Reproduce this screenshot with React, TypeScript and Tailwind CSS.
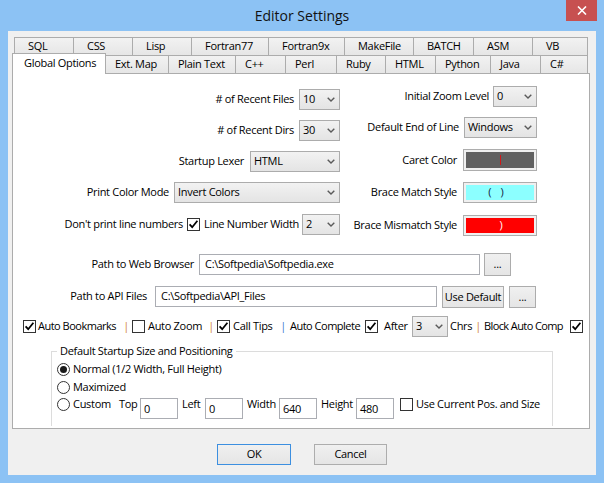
import React from "react";

function Chevron() {
  return (
    <svg width="8" height="5" viewBox="0 0 8 5" className="shrink-0">
      <path d="M0.7 0.7 L4 4 L7.3 0.7" stroke="#5a5a5a" strokeWidth="1.4" fill="none" />
    </svg>
  );
}

function Combo({ className, value }: { className: string; value: string }) {
  return (
    <div
      className={`${className} h-[21px] shrink-0 border border-[#acacac] bg-linear-to-b from-[#f2f2f2] to-[#e4e4e4] flex items-center justify-between pl-[3px] pr-[4px]`}
    >
      <span>{value}</span>
      <Chevron />
    </div>
  );
}

function Btn({ className, children }: { className: string; children: React.ReactNode }) {
  return (
    <div
      className={`${className} shrink-0 border bg-linear-to-b from-[#f0f0f0] to-[#e5e5e5] flex items-center justify-center`}
    >
      {children}
    </div>
  );
}

function TextBox({ className, value }: { className: string; value: string }) {
  return (
    <div className={`${className} shrink-0 h-[21px] border border-[#abadb3] bg-white flex items-center`}>
      {value}
    </div>
  );
}

function Check({ checked, className = "" }: { checked: boolean; className?: string }) {
  return (
    <div
      className={`${className} w-[13px] h-[13px] shrink-0 border border-[#333333] bg-white flex items-center justify-center`}
    >
      {checked && (
        <svg width="11" height="11" viewBox="0 0 11 11">
          <path d="M1.6 5.4 L4.2 8.2 L9.4 1.8" stroke="#000" strokeWidth="1.8" fill="none" />
        </svg>
      )}
    </div>
  );
}

function Radio({ checked }: { checked: boolean }) {
  return (
    <div className="w-[13px] h-[13px] shrink-0 rounded-full border border-[#333333] bg-white flex items-center justify-center">
      {checked && <div className="w-[7px] h-[7px] rounded-full bg-[#1a1a1a]" />}
    </div>
  );
}

const row1 = [
  { t: "SQL", w: "w-[60px]" },
  { t: "CSS", w: "w-[60px]" },
  { t: "Lisp", w: "w-[60px]" },
  { t: "Fortran77", w: "w-[78px]" },
  { t: "Fortran9x", w: "w-[77px]" },
  { t: "MakeFile", w: "w-[70px]" },
  { t: "BATCH", w: "w-[61px]" },
  { t: "ASM", w: "w-[60px]" },
  { t: "VB", w: "w-[56px]" },
];

const row2 = [
  { t: "Ext. Map", w: "w-[64px]" },
  { t: "Plain Text", w: "w-[68px]" },
  { t: "C++", w: "w-[51px]" },
  { t: "Perl", w: "w-[52px]" },
  { t: "Ruby", w: "w-[50px]" },
  { t: "HTML", w: "w-[51px]" },
  { t: "Python", w: "w-[56px]" },
  { t: "Java", w: "w-[51px]" },
  { t: "C#", w: "w-[48px]" },
];

export default function App() {
  return (
    <div className="w-[604px] h-[483px] bg-[#8cc2f4] flex flex-col overflow-hidden whitespace-nowrap font-['Open_Sans',sans-serif] text-[11px] tracking-[-0.3px] text-black">
      {/* Title bar */}
      <div className="relative h-[31px] shrink-0 flex items-center justify-center">
        <span className="text-[14px] tracking-normal text-[#111]">Editor Settings</span>
        <div className="absolute right-[7px] top-0 w-[31px] h-[21px] bg-[#c75050] flex items-center justify-center">
          <svg width="10" height="9" viewBox="0 0 10 9">
            <path d="M1 0.5 L9 8.5 M9 0.5 L1 8.5" stroke="#fff" strokeWidth="1.6" />
          </svg>
        </div>
      </div>

      {/* Client */}
      <div className="mx-[8px] h-[444px] shrink-0 bg-[#f0f0f0] flex flex-col">
        {/* Tab control */}
        <div className="ml-[4px] mt-[6px] w-[578px] flex flex-col">
          <div className="flex ml-[2px] h-[19px]">
            {row1.map((tab, i) => (
              <div
                key={tab.t}
                className={`${tab.w} ${i > 0 ? "-ml-px" : ""} h-[19px] shrink-0 border border-[#acacac] bg-linear-to-b from-[#f2f2f2] to-[#e6e6e6] flex items-center pl-[13px]`}
              >
                {tab.t}
              </div>
            ))}
          </div>
          <div className="flex -mt-[3px] h-[21px] items-end relative z-10">
            <div className="w-[94px] h-[21px] shrink-0 border-t border-l border-r border-[#acacac] bg-white flex items-center pl-[11px] pb-[1px]">
              Global Options
            </div>
            {row2.map((tab) => (
              <div
                key={tab.t}
                className={`${tab.w} -ml-px h-[19px] shrink-0 border border-[#acacac] bg-linear-to-b from-[#f2f2f2] to-[#e6e6e6] flex items-center pl-[9px]`}
              >
                {tab.t}
              </div>
            ))}
          </div>

          {/* Panel */}
          <div className="-mt-px h-[356px] border border-[#acacac] bg-white flex flex-col overflow-hidden">
            {/* Top section */}
            <div className="flex">
              <div className="w-[327px] shrink-0 flex flex-col items-end pt-[15px]">
                <div className="h-[21px] flex items-center">
                  <span># of Recent Files</span>
                  <Combo className="ml-[5px] w-[41px]" value="10" />
                </div>
                <div className="h-[21px] mt-[10px] flex items-center">
                  <span># of Recent Dirs</span>
                  <Combo className="ml-[5px] w-[41px]" value="30" />
                </div>
                <div className="h-[21px] mt-[10px] flex items-center">
                  <span>Startup Lexer</span>
                  <Combo className="ml-[6px] w-[90px]" value="HTML" />
                </div>
                <div className="h-[21px] mt-[10px] flex items-center">
                  <span>Print Color Mode</span>
                  <Combo className="ml-[5px] w-[166px]" value="Invert Colors" />
                </div>
                <div className="h-[22px] mt-[10px] flex items-center">
                  <span>Don't print line numbers</span>
                  <Check checked className="ml-[4px]" />
                  <span className="w-[99px] text-right">Line Number Width</span>
                  <Combo className="ml-[3px] w-[38px]" value="2" />
                </div>
              </div>

              <div className="w-[197px] shrink-0 flex flex-col items-end pt-[12px]">
                <div className="h-[21px] flex items-center">
                  <span>Initial Zoom Level</span>
                  <Combo className="ml-[4px] w-[44px]" value="0" />
                </div>
                <div className="h-[21px] mt-[10px] flex items-center">
                  <span>Default End of Line</span>
                  <Combo className="ml-[5px] w-[73px]" value="Windows" />
                </div>
                <div className="h-[22px] mt-[11px] flex items-center">
                  <span>Caret Color</span>
                  <div className="ml-[6px] w-[74px] h-[22px] border border-[#adadad] bg-[#f0f0f0] p-[2px]">
                    <div className="w-full h-full bg-[#616161] flex items-center justify-center">
                      <div className="w-[1px] h-[10px] bg-[#d01818]" />
                    </div>
                  </div>
                </div>
                <div className="h-[21px] mt-[11px] flex items-center">
                  <span>Brace Match Style</span>
                  <div className="ml-[6px] w-[74px] h-[21px] border border-[#adadad] bg-[#f0f0f0] p-[2px]">
                    <div className="w-full h-full bg-[#8cffff] flex items-center justify-center gap-[9px] pr-[8px] text-[#10243e] tracking-normal">
                      <span>(</span>
                      <span>)</span>
                    </div>
                  </div>
                </div>
                <div className="h-[21px] mt-[12px] flex items-center">
                  <span>Brace Mismatch Style</span>
                  <div className="ml-[6px] w-[74px] h-[21px] border border-[#adadad] bg-[#f0f0f0] p-[2px]">
                    <div className="w-full h-full bg-[#ff0000] flex items-center justify-center text-white pl-[2px]">
                      <span>)</span>
                    </div>
                  </div>
                </div>
              </div>
            </div>

            {/* Path rows */}
            <div className="mt-[17px] h-[23px] flex items-center">
              <span className="w-[181px] shrink-0 text-right">Path to Web Browser</span>
              <TextBox className="ml-[5px] w-[281px] pl-[5px]" value={"C:\\Softpedia\\Softpedia.exe"} />
              <Btn className="ml-[4px] w-[27px] h-[23px] border-[#acacac]">...</Btn>
            </div>
            <div className="mt-[10px] h-[22px] flex items-start">
              <span className="w-[134px] h-[21px] shrink-0 flex items-center justify-end">Path to API Files</span>
              <TextBox className="ml-[8px] w-[282px] pl-[5px]" value={"C:\\Softpedia\\API_Files"} />
              <Btn className="ml-[5px] w-[62px] h-[22px] border-[#acacac]">Use Default</Btn>
              <Btn className="ml-[5px] w-[27px] h-[22px] border-[#acacac]">...</Btn>
            </div>

            {/* Checkbox row */}
            <div className="mt-[8px] h-[21px] flex items-center pl-[10px]">
              <Check checked />
              <span className="ml-[2px] w-[84px] shrink-0 tracking-[-0.5px]">Auto Bookmarks</span>
              <span className="w-[8px] shrink-0 text-center text-[#d08434]">|</span>
              <Check checked={false} className="ml-[2px]" />
              <span className="ml-[3px] w-[59px] shrink-0">Auto Zoom</span>
              <span className="w-[8px] shrink-0 text-center text-[#d08434]">|</span>
              <Check checked className="ml-[2px]" />
              <span className="ml-[3px] w-[46px] shrink-0">Call Tips</span>
              <span className="w-[8px] shrink-0 text-center text-[#3a7ad0]">|</span>
              <span className="ml-[3px] w-[73px] shrink-0 tracking-[-0.5px]">Auto Complete</span>
              <Check checked className="ml-[2px]" />
              <span className="ml-[6px] w-[26px] shrink-0">After</span>
              <Combo className="ml-[2px] w-[36px]" value="3" />
              <span className="ml-[2px] w-[24px] shrink-0">Chrs</span>
              <span className="w-[8px] shrink-0 text-center text-[#d08434]">|</span>
              <span className="ml-[2px] w-[83px] shrink-0 tracking-[-0.6px]">Block Auto Comp</span>
              <Check checked className="ml-[3px]" />
            </div>

            {/* Group box */}
            <div className="mt-[14px] ml-[38px] w-[502px] h-[75px] shrink-0 border-t border-l border-r border-[#dcdcdc] flex flex-col">
              <div className="-mt-[9px] ml-[5px] w-fit h-[16px] px-[3px] bg-white flex items-center">
                Default Startup Size and Positioning
              </div>
              <div className="mt-[1px] h-[18px] pl-[5px] flex items-center">
                <Radio checked />
                <span className="ml-[3px]">Normal (1/2 Width, Full Height)</span>
              </div>
              <div className="h-[18px] pl-[5px] flex items-center">
                <Radio checked={false} />
                <span className="ml-[3px]">Maximized</span>
              </div>
              <div className="h-[23px] pl-[5px] flex items-start">
                <div className="w-[62px] h-[17px] shrink-0 flex items-center">
                  <Radio checked={false} />
                  <span className="ml-[3px]">Custom</span>
                </div>
                <span className="w-[21px] h-[17px] shrink-0 flex items-center">Top</span>
                <TextBox className="mt-[2px] w-[38px] pl-[3px] pt-[2px]" value="0" />
                <span className="ml-[4px] w-[23px] h-[17px] shrink-0 flex items-center">Left</span>
                <TextBox className="mt-[2px] w-[38px] pl-[3px] pt-[2px]" value="0" />
                <span className="ml-[4px] w-[32px] h-[17px] shrink-0 flex items-center">Width</span>
                <TextBox className="mt-[2px] w-[38px] pl-[3px] pt-[2px]" value="640" />
                <span className="ml-[4px] w-[35px] h-[17px] shrink-0 flex items-center">Height</span>
                <TextBox className="mt-[2px] w-[38px] pl-[3px] pt-[2px]" value="480" />
                <div className="ml-[6px] h-[17px] flex items-center">
                  <Check checked={false} />
                  <span className="ml-[3px]">Use Current Pos. and Size</span>
                </div>
              </div>
            </div>
          </div>
        </div>

        {/* Dialog buttons */}
        <div className="mt-[15px] pl-[209px] flex">
          <Btn className="w-[74px] h-[21px] border-[#3c8fe0]">OK</Btn>
          <Btn className="ml-[23px] w-[73px] h-[21px] border-[#adadad]">Cancel</Btn>
        </div>
      </div>
    </div>
  );
}
